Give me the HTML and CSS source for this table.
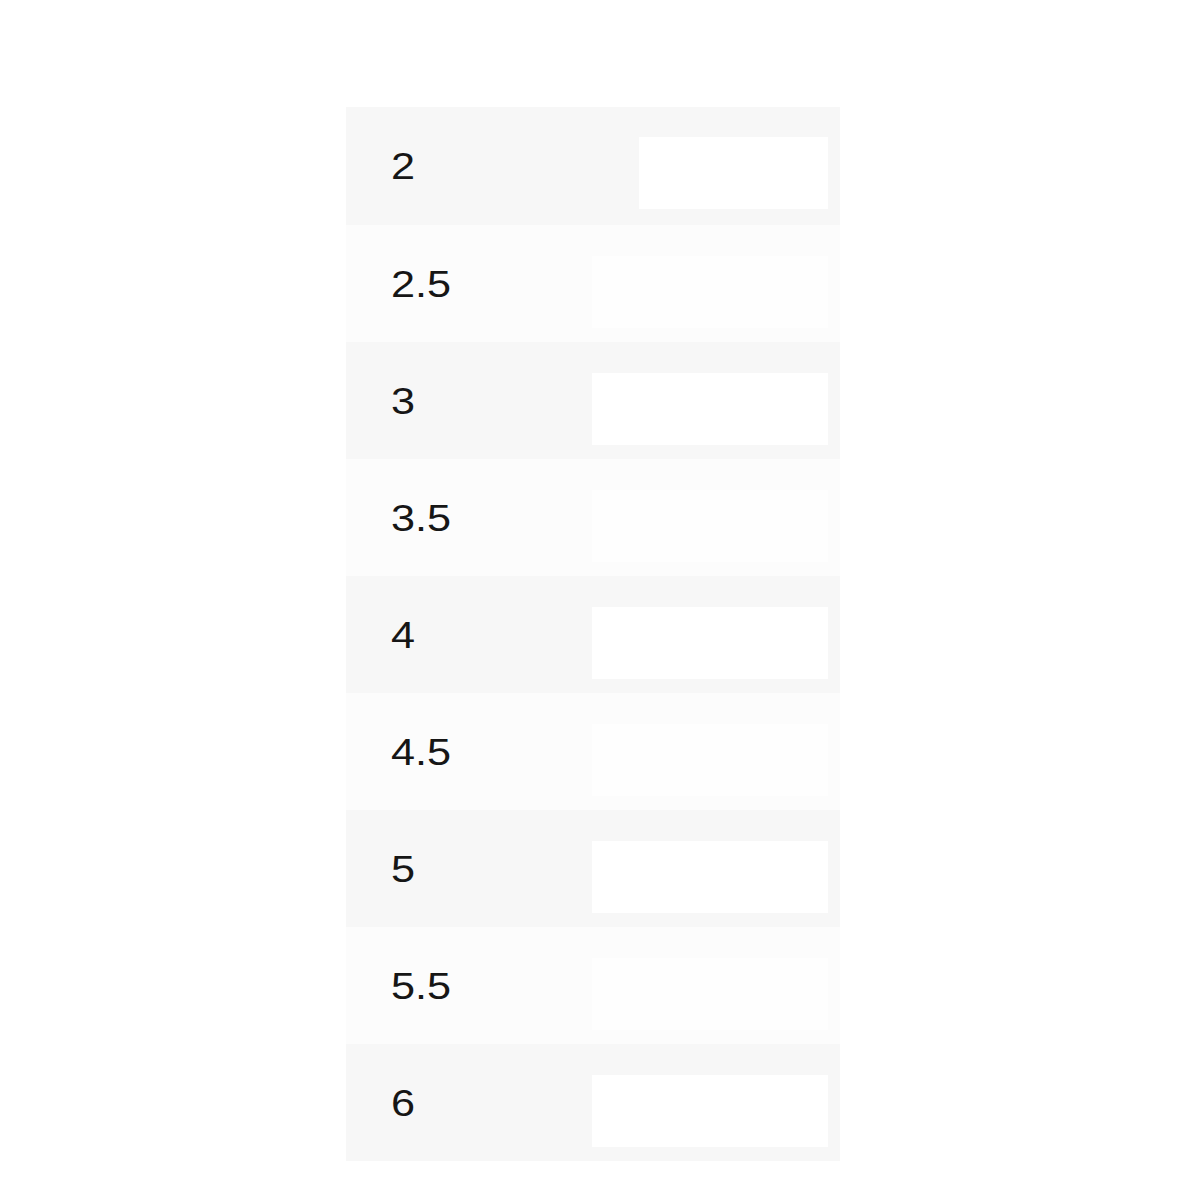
FILE: index.html
```html
<!DOCTYPE html>
<html>
<head>
<meta charset="utf-8">
<link rel="stylesheet" href="styles.css">
</head>
<body>
<div class="list">
  <div class="row dark first"><span class="label">2</span><div class="box narrow"></div></div>
  <div class="row light"><span class="label">2.5</span><div class="box"></div></div>
  <div class="row dark"><span class="label">3</span><div class="box"></div></div>
  <div class="row light"><span class="label">3.5</span><div class="box"></div></div>
  <div class="row dark"><span class="label">4</span><div class="box"></div></div>
  <div class="row light"><span class="label">4.5</span><div class="box"></div></div>
  <div class="row dark"><span class="label">5</span><div class="box"></div></div>
  <div class="row light"><span class="label">5.5</span><div class="box"></div></div>
  <div class="row dark"><span class="label">6</span><div class="box"></div></div>
</div>
</body>
</html>
```
FILE: styles.css
```css
html, body {
  margin: 0;
  padding: 0;
  background: #ffffff;
}
.list {
  margin: 107px 0 0 346px;
  width: 494px;
  display: flex;
  flex-direction: column;
}
.row {
  height: 117px;
  box-sizing: border-box;
  display: flex;
  align-items: center;
  padding: 1px 12px 0 45px;
}
.row.first {
  height: 118px;
  padding-top: 0;
}
.dark {
  background: #f7f7f7;
}
.light {
  background: #fcfcfc;
}
.label {
  display: inline-block;
  font-family: "Liberation Sans", Arial, sans-serif;
  font-size: 36px;
  line-height: 41px;
  color: #161616;
  transform: scaleX(1.2);
  transform-origin: left center;
}
.box {
  align-self: flex-start;
  margin-top: 30px;
  margin-left: auto;
  width: 236px;
  height: 72px;
  background: #ffffff;
}
.row.first .box {
  margin-top: 30px;
}
.box.narrow {
  width: 189px;
}
.light .box {
  background: #fefefe;
}
```
